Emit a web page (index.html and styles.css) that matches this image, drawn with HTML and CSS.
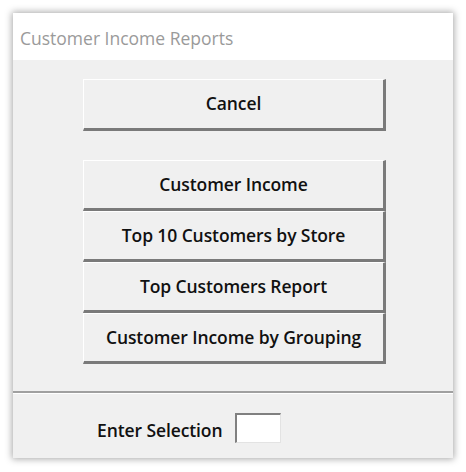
FILE: index.html
```html
<!DOCTYPE html>
<html>
<head>
<meta charset="utf-8">
<link rel="stylesheet" href="styles.css">
</head>
<body>
<div class="window">
  <div class="titlebar">Customer Income Reports</div>
  <div class="content">
    <div class="buttons">
      <button class="btn cancel">Cancel</button>
      <div class="group">
        <button class="btn">Customer Income</button>
        <button class="btn">Top 10 Customers by Store</button>
        <button class="btn">Top Customers Report</button>
        <button class="btn">Customer Income by Grouping</button>
      </div>
    </div>
  </div>
  <div class="footer">
    <span class="label">Enter Selection</span>
    <span class="input"></span>
  </div>
</div>
</body>
</html>
```
FILE: styles.css
```css
html, body {
  margin: 0;
  padding: 0;
  background: #ffffff;
}
body {
  padding: 13px;
  font-family: "Open Sans", "Noto Sans", sans-serif;
}
.window {
  width: 440px;
  height: 445px;
  background: #f0f0f0;
  box-shadow: 0 0 7px 1px rgba(0,0,0,0.35);
  display: flex;
  flex-direction: column;
}
.titlebar {
  height: 47px;
  background: #ffffff;
  color: #9a9a9a;
  font-size: 17.5px;
  padding-left: 7px;
  display: flex;
  align-items: center;
  box-sizing: border-box;
  padding-top: 2px;
}
.content {
  padding: 19px 0 0 70px;
  height: 333px;
  box-sizing: border-box;
  border-bottom: 2px solid #a0a0a0;
}
.buttons {
  width: 303px;
  display: flex;
  flex-direction: column;
  gap: 29px;
}
.group {
  display: flex;
  flex-direction: column;
}
.btn {
  height: 52px;
  width: 303px;
  background: #f0f0f0;
  border-style: solid;
  border-width: 1px 3px 3px 1px;
  border-color: #ffffff #7a7a7a #7a7a7a #ffffff;
  font-family: "Open Sans", "Noto Sans", sans-serif;
  font-weight: 600;
  font-size: 17.5px;
  letter-spacing: -0.1px;
  color: #111;
  padding: 0 0 2px 0;
  margin: 0;
}
.group .btn {
  height: 51px;
}
.footer {
  flex: 1;
  display: flex;
  align-items: center;
  padding-left: 84px;
  border-top: 1px solid #ffffff;
}
.label {
  font-weight: 600;
  font-size: 17.5px;
  letter-spacing: -0.1px;
  color: #111;
  margin-right: 13px;
  padding-top: 8px;
}
.input {
  width: 43px;
  height: 27px;
  background: #fff;
  border-style: solid;
  border-width: 2px 1px 1px 2px;
  border-color: #808080 #e3e3e3 #e3e3e3 #808080;
  margin-top: 4px;
}
```
